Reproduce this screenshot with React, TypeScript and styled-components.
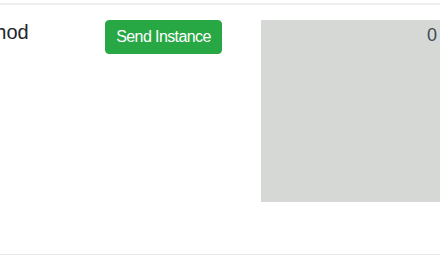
import styled, { createGlobalStyle } from "styled-components";

const GlobalStyle = createGlobalStyle`
  html, body {
    margin: 0;
    padding: 0;
    background: #ffffff;
    overflow: hidden;
  }
  body {
    font-family: "Liberation Sans", Arial, sans-serif;
    color: #212529;
  }
`;

const Page = styled.div`
  width: 440px;
  height: 264px;
  padding-top: 3px;
  box-sizing: border-box;
  overflow: hidden;
`;

const Row = styled.div`
  display: flex;
  align-items: flex-start;
  margin-left: -38px;
  width: 520px;
  padding: 15px 0 52px;
  border-top: 2px solid #eeeeee;
  border-bottom: 1px solid #e6e6e6;
`;

const Label = styled.div`
  width: 143px;
  flex-shrink: 0;
  font-size: 20px;
  line-height: 20px;
  padding-top: 2px;
`;

const SendButton = styled.button`
  width: 117px;
  flex-shrink: 0;
  margin: 0;
  padding: 6px 0;
  border: 1px solid #28a745;
  border-radius: 4px;
  background: #28a745;
  color: #ffffff;
  font-family: "Liberation Sans", Arial, sans-serif;
  font-size: 16px;
  line-height: 20px;
  letter-spacing: -0.6px;
  cursor: pointer;
`;

const Preview = styled.div`
  margin-left: 39px;
  width: 180px;
  height: 182px;
  flex-shrink: 0;
  box-sizing: border-box;
  padding: 5px 4px 0 0;
  background: #d6d8d5;
  text-align: right;
  font-size: 18px;
  line-height: 20px;
  color: #3b4a55;
`;

export default function App() {
  return (
    <Page>
      <GlobalStyle />
      <Row>
        <Label>Method</Label>
        <SendButton>Send Instance</SendButton>
        <Preview>0</Preview>
      </Row>
    </Page>
  );
}
